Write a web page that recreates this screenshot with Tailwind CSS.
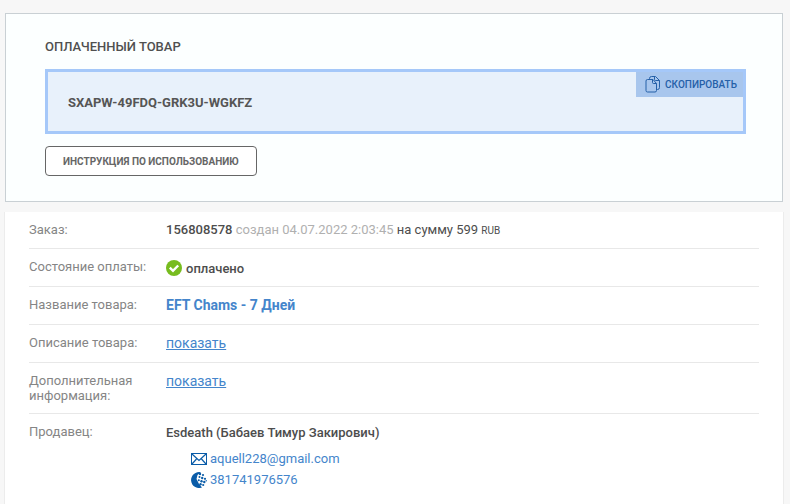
<!DOCTYPE html>
<html lang="ru">
    <head>
        <meta charset="UTF-8" />
        <meta name="viewport" content="width=device-width, initial-scale=1.0" />
        <title>Оплаченный товар</title>
        <script src="https://cdn.jsdelivr.net/npm/@tailwindcss/browser@4"></script>
    </head>
    <body class="bg-[#f7f7f7] font-[Roboto,'Liberation_Sans',sans-serif] text-[13px] leading-[15px] text-[#4d4d4d]">
        <main class="pt-[13px] pl-[5px] pr-[7px] min-h-screen flex flex-col">
            <section class="bg-[#fcffff] border border-[#c9d0d4] pt-[25px] pb-[25px] pl-[39px] pr-[36px]">
                <h1 class="font-medium text-[#505050] uppercase">Оплаченный товар</h1>
                <div class="relative mt-[15px] h-[65px] flex items-center border-3 border-[#a5c8f9] bg-[#e8f1fb] px-5">
                    <span class="font-bold text-[#555] pt-0.5">SXAPW-49FDQ-GRK3U-WGKFZ</span>
                    <button type="button" class="absolute top-0 right-0 h-[25px] flex items-center gap-1 pl-[9px] pr-[6px] bg-[#a8c6ed] text-[#2560a8] text-[10px] font-medium uppercase">
                        <svg class="w-[16px] h-[17px]" viewBox="0 0 16 17" fill="none" stroke="#2560a8" stroke-linejoin="round">
                            <path d="M4.500 3V2.500Q4.500 0.500 6.500 0.500H10.500L14.500 4.500V11.500Q14.500 13.500 12.500 13.500H12" />
                            <path d="M9.500 0.500V3.500Q9.500 4.500 10.500 4.500H14.500" />
                            <path d="M2.500 3.500H8L11.500 7.500V14.500Q11.500 16 10 16H2.500Q1 16 1 14.500V5Q1 3.500 2.500 3.500Z" />
                            <path d="M7.500 3.500V6.500Q7.500 7.500 8.500 7.500H11.500" />
                        </svg>
                        Скопировать
                    </button>
                </div>
                <button type="button" class="mt-3 h-[30px] px-[17px] block rounded-sm border border-[#666] bg-white text-[#666] text-[10px] font-bold uppercase">
                    Инструкция по использованию
                </button>
            </section>

            <section class="grow -mx-px mt-[10px] bg-white border-x border-[#ececec] px-6">
                <dl class="divide-y divide-[#e8e8e8]">
                    <div class="flex pt-[10px] pb-[10px]">
                        <dt class="w-[137px] shrink-0 text-[#858585]">Заказ:</dt>
                        <dd><span class="font-medium">156808578</span> <span class="text-[#b0b0b0]">создан 04.07.2022 2:03:45</span> на сумму 599 <span class="text-[10px]">RUB</span></dd>
                    </div>
                    <div class="flex pt-[10px] pb-[10px]">
                        <dt class="w-[137px] shrink-0 text-[#858585]">Состояние оплаты:</dt>
                        <dd class="pt-px flex items-center gap-1 font-medium">
                            <svg class="w-4 h-4" viewBox="0 0 16 16">
                                <circle cx="8" cy="8" r="8" fill="#77bc1f" />
                                <path d="M3.800 7.700L7 10.800L12.200 5.500" fill="none" stroke="#fff" stroke-width="2.400" />
                            </svg>
                            оплачено
                        </dd>
                    </div>
                    <div class="flex pt-[10px] pb-[11px]">
                        <dt class="w-[137px] shrink-0 text-[#858585]">Название товара:</dt>
                        <dd class="pt-px"><a href="#" class="text-[14px] font-bold text-[#4485cb]">EFT Chams - 7 Дней</a></dd>
                    </div>
                    <div class="flex pt-[10px] pb-[11px]">
                        <dt class="w-[137px] shrink-0 text-[#858585]">Описание товара:</dt>
                        <dd class="pt-px"><a href="#" class="text-[14px] text-[#4485cb] underline">показать</a></dd>
                    </div>
                    <div class="flex pt-[10px] pb-[10px]">
                        <dt class="w-[137px] shrink-0 text-[#858585]">Дополнительная информация:</dt>
                        <dd class="pt-px"><a href="#" class="text-[14px] text-[#4485cb] underline">показать</a></dd>
                    </div>
                    <div class="flex pt-[10px]">
                        <dt class="w-[137px] shrink-0 text-[#858585]">Продавец:</dt>
                        <dd class="pt-px">
                            <p class="font-medium">Esdeath (Бабаев Тимур Закирович)</p>
                            <ul class="mt-2 ml-[25px] leading-[21px] text-[#4485cb]">
                                <li class="flex items-center gap-[3px]">
                                    <svg class="w-4 h-3" viewBox="0 0 16 12" fill="none" stroke="#0a5ca8">
                                        <rect x="0.500" y="0.500" width="15" height="11" />
                                        <path d="M1 1L8 7.500L15 1M1 11L5.500 6M15 11L10.500 6" stroke-width="1.200" />
                                    </svg>
                                    <a href="mailto:aquell228@gmail.com">aquell228@gmail.com</a>
                                </li>
                                <li class="flex items-center gap-[3px]">
                                    <svg class="w-4 h-4" viewBox="0 0 16 16">
                                        <path d="M10 0.300A8 8 0 1 0 11 15.500L8 12L5.500 7L6.500 3Z" fill="#0a5ca8" />
                                        <g fill="#0a5ca8">
                                            <circle cx="9" cy="2" r="1.200" />
                                            <circle cx="12" cy="3" r="1.100" />
                                            <circle cx="8.500" cy="5" r="1" />
                                            <circle cx="11.200" cy="6" r="1.200" />
                                            <circle cx="14" cy="6.800" r="1.100" />
                                            <circle cx="7.800" cy="8.200" r="1" />
                                            <circle cx="10.500" cy="9.200" r="1.200" />
                                            <circle cx="13.300" cy="10" r="1.200" />
                                            <circle cx="9.500" cy="12.200" r="1.200" />
                                            <circle cx="12.200" cy="13" r="1.100" />
                                            <circle cx="15.200" cy="8.800" r="0.700" />
                                        </g>
                                    </svg>
                                    <a href="#">381741976576</a>
                                </li>
                            </ul>
                        </dd>
                    </div>
                </dl>
            </section>
        </main>
    </body>
</html>
